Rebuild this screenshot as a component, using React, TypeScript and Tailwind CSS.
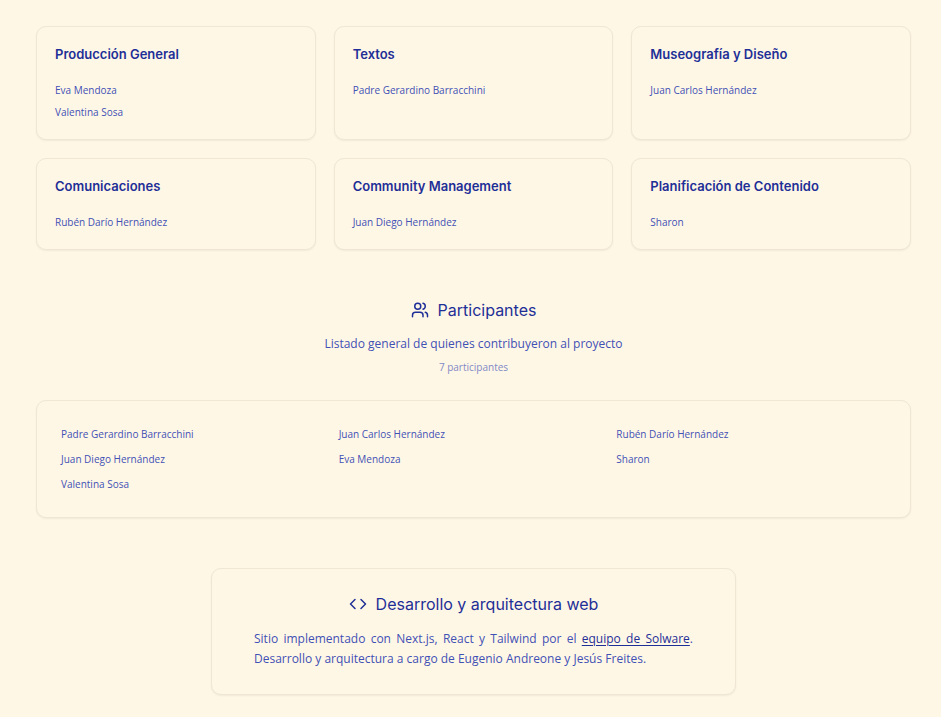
import { Code, Users } from 'lucide-react';

const teams = [
  { title: 'Producción General', members: ['Eva Mendoza', 'Valentina Sosa'] },
  { title: 'Textos', members: ['Padre Gerardino Barracchini'] },
  { title: 'Museografía y Diseño', members: ['Juan Carlos Hernández'] },
  { title: 'Comunicaciones', members: ['Rubén Darío Hernández'] },
  { title: 'Community Management', members: ['Juan Diego Hernández'] },
  { title: 'Planificación de Contenido', members: ['Sharon'] },
];

const participants = [
  'Padre Gerardino Barracchini',
  'Juan Carlos Hernández',
  'Rubén Darío Hernández',
  'Juan Diego Hernández',
  'Eva Mendoza',
  'Sharon',
  'Valentina Sosa',
];

const card = 'rounded-[10px] border border-[#efe6d4] shadow-[0_1px_2px_rgba(0,0,0,0.06)] bg-[#fff7e6]';
const heading = "font-['Inter',sans-serif] text-[#1e2f97]";

export default function App() {
  return (
    <main className="min-h-screen bg-[#fff7e6] pt-[26px] pr-[30px] pb-[22px] pl-9 font-['Open_Sans','Noto_Sans',sans-serif] text-[#3f51b5]">
      <section className="grid grid-cols-3 gap-[18px]">
        {teams.map((team) => (
          <article key={team.title} className={`${card} px-[18px] pt-[17px] pb-[14px]`}>
            <h3 className={`${heading} text-[13px] leading-5 font-semibold`}>{team.title}</h3>
            <ul className="mt-[17px] text-[10px] leading-[18px]">
              {team.members.map((name) => (
                <li key={name} className="mb-1">{name}</li>
              ))}
            </ul>
          </article>
        ))}
      </section>

      <section className="mt-12">
        <header className="text-center">
          <h2 className={`${heading} flex items-center justify-center gap-[9px] text-[16px] leading-6 font-normal`}>
            <Users size={18} aria-hidden="true" />
            Participantes
          </h2>
          <p className="mt-3 text-[12px] leading-5">Listado general de quienes contribuyeron al proyecto</p>
          <p className="mt-[3px] text-[10px] leading-5 text-[#7f8ac6]">7 participantes</p>
        </header>
        <ul className={`${card} mt-[23px] grid grid-cols-3 gap-x-2 gap-y-[7px] px-6 py-6 text-[10px] leading-[18px]`}>
          {participants.map((name) => (
            <li key={name}>{name}</li>
          ))}
        </ul>
      </section>

      <section className={`${card} mx-auto mt-[50px] w-3/5 px-[42px] pt-[23px] pb-[25px]`}>
        <h2 className={`${heading} flex items-center justify-center gap-[9px] text-[16px] leading-6 font-normal`}>
          <Code size={18} aria-hidden="true" />
          Desarrollo y arquitectura web
        </h2>
        <p className="mt-[13px] text-justify text-[12px] leading-5">
          Sitio implementado con Next.js, React y Tailwind por el{' '}
          <a href="#solware" className="text-[#1e2f97] underline underline-offset-2">equipo de Solware</a>. Desarrollo y
          arquitectura a cargo de Eugenio Andreone y Jesús Freites.
        </p>
      </section>
    </main>
  );
}
